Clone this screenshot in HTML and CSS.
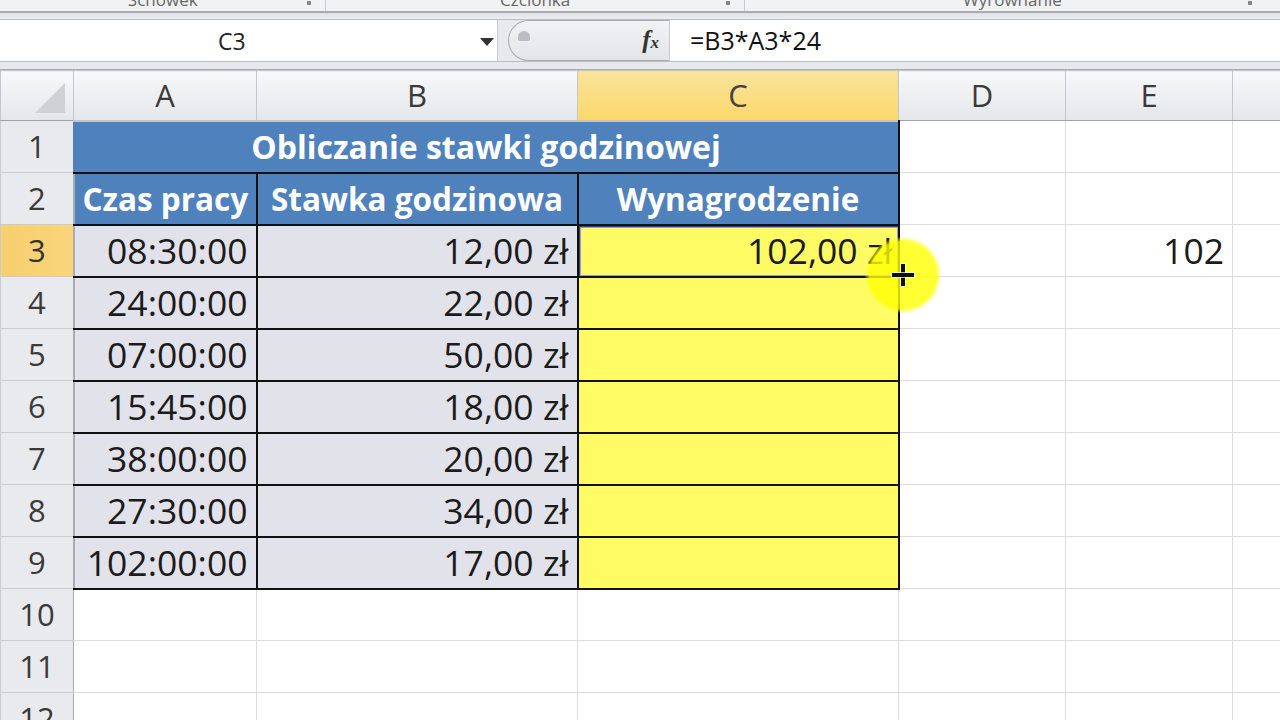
FILE: index.html
```html
<!DOCTYPE html>
<html>
<head>
  <meta charset="utf-8">
  <title>Obliczanie stawki godzinowej</title>
  <link rel="stylesheet" href="styles.css">
</head>
<body>

<div class="ribbon">
  <div class="group g-clip"><span>Schowek</span><i class="launcher"></i></div>
  <div class="group g-font"><span>Czcionka</span><i class="launcher"></i></div>
  <div class="group g-align"><span>Wyrównanie</span><i class="launcher"></i></div>
</div>
<div class="ribbon-edge"></div>

<div class="formula-bar">
  <div class="name-box">
    <span class="name">C3</span>
    <span class="arrow"></span>
  </div>
  <div class="fx-zone">
    <div class="pill">
      <span class="grip"></span>
      <span class="fx">f<span class="fx-x">x</span></span>
    </div>
  </div>
  <div class="formula">=B3*A3*24</div>
</div>
<div class="bar-gap"></div>

<div class="sheet-wrap">
<table class="sheet">
  <colgroup>
    <col class="c-rh">
    <col class="c-a">
    <col class="c-b">
    <col class="c-c">
    <col class="c-d">
    <col class="c-e">
    <col class="c-f">
  </colgroup>
  <tr class="col-heads">
    <th class="corner"><span class="corner-tri"></span></th>
    <th>A</th>
    <th>B</th>
    <th class="sel">C</th>
    <th>D</th>
    <th>E</th>
    <th></th>
  </tr>
  <tr>
    <th class="rh">1</th>
    <td colspan="3" class="title">Obliczanie stawki godzinowej</td>
    <td></td><td></td><td></td>
  </tr>
  <tr>
    <th class="rh">2</th>
    <td class="head">Czas pracy</td>
    <td class="head">Stawka godzinowa</td>
    <td class="head">Wynagrodzenie</td>
    <td></td><td></td><td></td>
  </tr>
  <tr>
    <th class="rh sel">3</th>
    <td class="data">08:30:00</td>
    <td class="data">12,00 zł</td>
    <td class="pay active"><span class="val">102,00 zł</span></td>
    <td></td><td class="num">102</td><td></td>
  </tr>
  <tr>
    <th class="rh">4</th>
    <td class="data">24:00:00</td>
    <td class="data">22,00 zł</td>
    <td class="pay"></td>
    <td></td><td></td><td></td>
  </tr>
  <tr>
    <th class="rh">5</th>
    <td class="data">07:00:00</td>
    <td class="data">50,00 zł</td>
    <td class="pay"></td>
    <td></td><td></td><td></td>
  </tr>
  <tr>
    <th class="rh">6</th>
    <td class="data">15:45:00</td>
    <td class="data">18,00 zł</td>
    <td class="pay"></td>
    <td></td><td></td><td></td>
  </tr>
  <tr>
    <th class="rh">7</th>
    <td class="data">38:00:00</td>
    <td class="data">20,00 zł</td>
    <td class="pay"></td>
    <td></td><td></td><td></td>
  </tr>
  <tr>
    <th class="rh">8</th>
    <td class="data">27:30:00</td>
    <td class="data">34,00 zł</td>
    <td class="pay"></td>
    <td></td><td></td><td></td>
  </tr>
  <tr>
    <th class="rh">9</th>
    <td class="data">102:00:00</td>
    <td class="data">17,00 zł</td>
    <td class="pay"></td>
    <td></td><td></td><td></td>
  </tr>
  <tr>
    <th class="rh">10</th>
    <td></td><td></td><td></td><td></td><td></td><td></td>
  </tr>
  <tr>
    <th class="rh">11</th>
    <td></td><td></td><td></td><td></td><td></td><td></td>
  </tr>
  <tr>
    <th class="rh">12</th>
    <td></td><td></td><td></td><td></td><td></td><td></td>
  </tr>
</table>

<!-- mouse pointer highlight over the fill handle -->
<div class="spot"></div>
<div class="cross"></div>
</div>

</body>
</html>
```

FILE: styles.css
```css
body {
  margin: 0;
  width: 1280px;
  height: 720px;
  overflow: hidden;
  background: #fff;
  font-family: "Open Sans", "DejaVu Sans", sans-serif;
}

/* ribbon remains at the top */
.ribbon {
  height: 11px;
  background: #f1f2f4;
  display: flex;
  overflow: hidden;
}
.group {
  position: relative;
  border-right: 1px solid #c9cbcf;
  display: flex;
  justify-content: center;
}
.group span {
  font-size: 17px;
  line-height: 17px;
  margin-top: -9px;
  color: #666;
}
.g-clip { width: 326px; }
.g-font { width: 418px; }
.g-align { width: 536px; border-right: 0; }
.launcher {
  position: absolute;
  right: 14px;
  top: 1px;
  width: 4px;
  height: 4px;
  background: #888;
}
.g-align .launcher { right: 28px; }
.ribbon-edge {
  height: 8px;
  border-top: 2px solid #a9abaf;
  background: linear-gradient(#dfe1e4, #eceef1);
  box-sizing: border-box;
}

/* formula bar */
.formula-bar {
  display: flex;
  height: 43px;
  border-top: 1px solid #b9bcc1;
  border-bottom: 1px solid #b9bcc1;
  background: #fff;
  box-sizing: border-box;
}
.name-box {
  width: 497px;
  display: flex;
  align-items: center;
  position: relative;
  border-right: 1px solid #c8cacd;
}
.name {
  margin-left: 218px;
  font-size: 23px;
  color: #222;
}
.arrow {
  position: absolute;
  left: 480px;
  top: 18px;
  border-left: 7px solid transparent;
  border-right: 7px solid transparent;
  border-top: 8px solid #333;
}
.fx-zone {
  width: 172px;
  background: #e8e9ec;
  display: flex;
  align-items: stretch;
  padding-left: 10px;
  border-right: 1px solid #c8cacd;
  box-sizing: border-box;
}
.pill {
  flex: 1;
  position: relative;
  border: 1px solid #a7aaaf;
  border-right: 0;
  border-radius: 22px 0 0 22px;
  background: linear-gradient(#f1f2f4, #e3e5e8);
}
.grip {
  position: absolute;
  left: 9px;
  top: 10px;
  width: 12px;
  height: 10px;
  border-radius: 6px 6px 2px 2px;
  background: #b9bcc1;
}
.fx {
  position: absolute;
  right: 10px;
  top: 5px;
  font-family: "Liberation Serif", serif;
  font-style: italic;
  font-weight: bold;
  font-size: 25px;
  color: #333;
}
.fx-x {
  font-size: 17px;
}
.formula {
  flex: 1;
  padding-left: 20px;
  font-size: 25px;
  line-height: 41px;
  color: #111;
}
.bar-gap {
  height: 8px;
  background: #e6e8eb;
  border-bottom: 1px solid #a9abaf;
  box-sizing: border-box;
}

/* sheet grid */
.sheet-wrap {
  position: relative;
}
.sheet {
  border-collapse: collapse;
  table-layout: fixed;
  width: 1300px;
  font-size: 35.5px;
  line-height: 1;
  color: #1b1b1b;
}
.c-rh { width: 73px; }
.c-a { width: 183px; }
.c-b { width: 321px; }
.c-c { width: 321px; }
.c-d { width: 167px; }
.c-e { width: 167px; }
.c-f { width: 68px; }

.sheet tr {
  height: 52px;
}
.sheet tr.col-heads {
  height: 50px;
}
.sheet td {
  padding: 0 8px;
  border: 1px solid #dadcdf;
  white-space: nowrap;
  overflow: hidden;
}
.col-heads th {
  padding: 0;
  font-weight: normal;
  font-size: 31px;
  color: #3a3a3a;
  background: linear-gradient(#f7f8f9, #e4e6e9);
  border: 1px solid #c3c6ca;
  border-bottom-color: #9ea3a9;
}
.col-heads th.sel {
  background: linear-gradient(#f8e39c, #fcd86a);
  border-bottom-color: #c2a25a;
  color: #444;
}
.corner {
  position: relative;
}
.corner-tri {
  position: absolute;
  right: 8px;
  bottom: 7px;
  border-left: 30px solid transparent;
  border-bottom: 30px solid #cfd1d4;
}
.rh {
  padding: 0;
  font-weight: normal;
  font-size: 31px;
  color: #3a3a3a;
  background: #e9eaed;
  border: 1px solid #c9ccd0;
  border-right-color: #a9adb3;
}
.rh.sel {
  background: linear-gradient(90deg, #f6cf6f, #f9d57a);
  color: #333;
}

.title {
  background: #4f81bd;
  color: #fff;
  font-weight: bold;
  font-size: 32px;
  text-align: center;
}
.sheet td.title,
.sheet td.head,
.sheet td.data,
.sheet td.pay {
  border: 2px solid #111;
}
.sheet td.title {
  border-top-color: #c3c6ca;
  border-left-color: #4f81bd;
}
.head {
  background: #4f81bd;
  color: #fff;
  font-weight: bold;
  font-size: 31.5px;
  text-align: center;
}
.sheet td.head:nth-child(2),
.sheet td.data:nth-child(2) {
  border-left-color: #a9adb3;
}
.data {
  background: #e2e2ea;
  text-align: right;
}
.pay {
  background: #fffb64;
  text-align: right;
}
.pay .val {
  position: relative;
  left: 3px;
}
.num {
  text-align: right;
}
.active {
  position: relative;
}
.active::after {
  content: "";
  position: absolute;
  left: -2px;
  top: -2px;
  right: -3px;
  bottom: -3px;
  border: 3px solid #3c3d6a;
  box-shadow: inset 0 0 0 1px #9b9bd0;
}

.spot {
  position: absolute;
  left: 865px;
  top: 167px;
  width: 76px;
  height: 76px;
  border-radius: 50%;
  opacity: 0.8;
  background: radial-gradient(circle, #ffff00 0, #ffff00 62%, rgba(255, 255, 0, 0) 72%);
}
.cross {
  position: absolute;
  left: 892px;
  top: 194px;
  width: 22px;
  height: 22px;
}
.cross::before,
.cross::after {
  content: "";
  position: absolute;
  background: #111;
  box-shadow: 0 0 0 1px rgba(255, 255, 255, 0.7);
}
.cross::before {
  left: 9px;
  top: 0;
  width: 4px;
  height: 22px;
}
.cross::after {
  left: 0;
  top: 9px;
  width: 22px;
  height: 4px;
}
```
